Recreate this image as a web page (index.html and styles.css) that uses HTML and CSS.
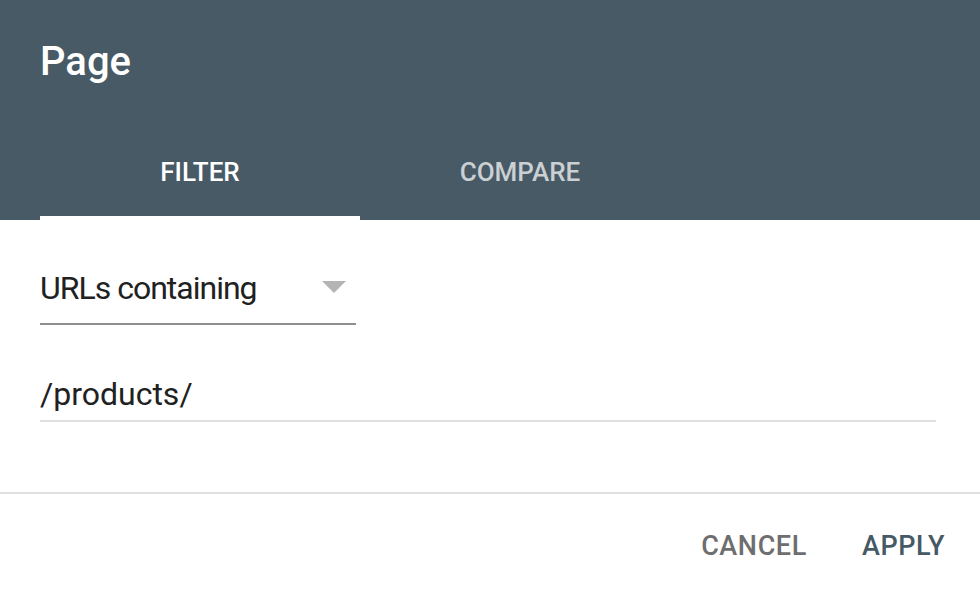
FILE: index.html
```html
<!DOCTYPE html>
<html lang="en">
<head>
<meta charset="utf-8">
<title>Page filter</title>
<link rel="stylesheet" href="styles.css">
</head>
<body>
<div class="dialog">
  <header class="head">
    <h1 class="title">Page</h1>
    <nav class="tabs">
      <div class="tab active">FILTER</div>
      <div class="tab">COMPARE</div>
    </nav>
  </header>
  <section class="content">
    <div class="select">
      <span class="select-text">URLs containing</span>
      <svg class="caret" width="24" height="12" viewBox="0 0 24 12"><path d="M0 0h24L12 12z" fill="#b4b4b4"/></svg>
    </div>
    <div class="input">/products/</div>
  </section>
  <footer class="actions">
    <span class="btn cancel">CANCEL</span>
    <span class="btn apply">APPLY</span>
  </footer>
</div>
</body>
</html>
```
FILE: styles.css
```css
html, body {
  margin: 0;
  padding: 0;
  background: #fff;
}
body {
  font-family: Roboto, "Liberation Sans", sans-serif;
  width: 980px;
  height: 594px;
  overflow: hidden;
}
.head {
  background: #475a66;
  height: 220px;
  padding: 0 40px;
  box-sizing: border-box;
  display: flex;
  flex-direction: column;
}
.title {
  margin: 0;
  padding-top: 38px;
  height: 86px;
  font-size: 40px;
  line-height: 48px;
  font-weight: 500;
  color: #fff;
}
.tabs {
  display: flex;
  height: 96px;
}
.tab {
  width: 320px;
  box-sizing: border-box;
  padding-top: 4px;
  border-bottom: 4px solid transparent;
  display: flex;
  align-items: center;
  justify-content: center;
  font-size: 26px;
  font-weight: 500;
  color: rgba(255,255,255,0.72);
}
.tab.active {
  color: #fff;
  border-bottom-color: #fff;
}
.content {
  padding: 0 44px 0 40px;
  height: 274px;
  box-sizing: border-box;
  border-bottom: 2px solid #e0e0e0;
  display: flex;
  flex-direction: column;
}
.select {
  width: 316px;
  margin-top: 46px;
  height: 59px;
  box-sizing: border-box;
  border-bottom: 2px solid #8e8e8e;
  display: flex;
  align-items: flex-start;
  justify-content: space-between;
  padding-right: 10px;
}
.select-text {
  font-size: 32px;
  line-height: 44px;
  letter-spacing: -1px;
  color: #212121;
}
.caret {
  margin-top: 15px;
}
.input {
  margin-top: 47px;
  height: 50px;
  box-sizing: border-box;
  border-bottom: 2px solid #e0e0e0;
  font-size: 32px;
  line-height: 44px;
  color: #212121;
}
.actions {
  display: flex;
  justify-content: flex-end;
  align-items: center;
  gap: 55px;
  padding: 4px 35px 0 0;
  height: 100px;
  box-sizing: border-box;
}
.btn {
  font-size: 27px;
  font-weight: 500;
  line-height: 32px;
  letter-spacing: 0.6px;
}
.cancel { color: #6e6e6e; }
.apply { color: #465a65; }
```
